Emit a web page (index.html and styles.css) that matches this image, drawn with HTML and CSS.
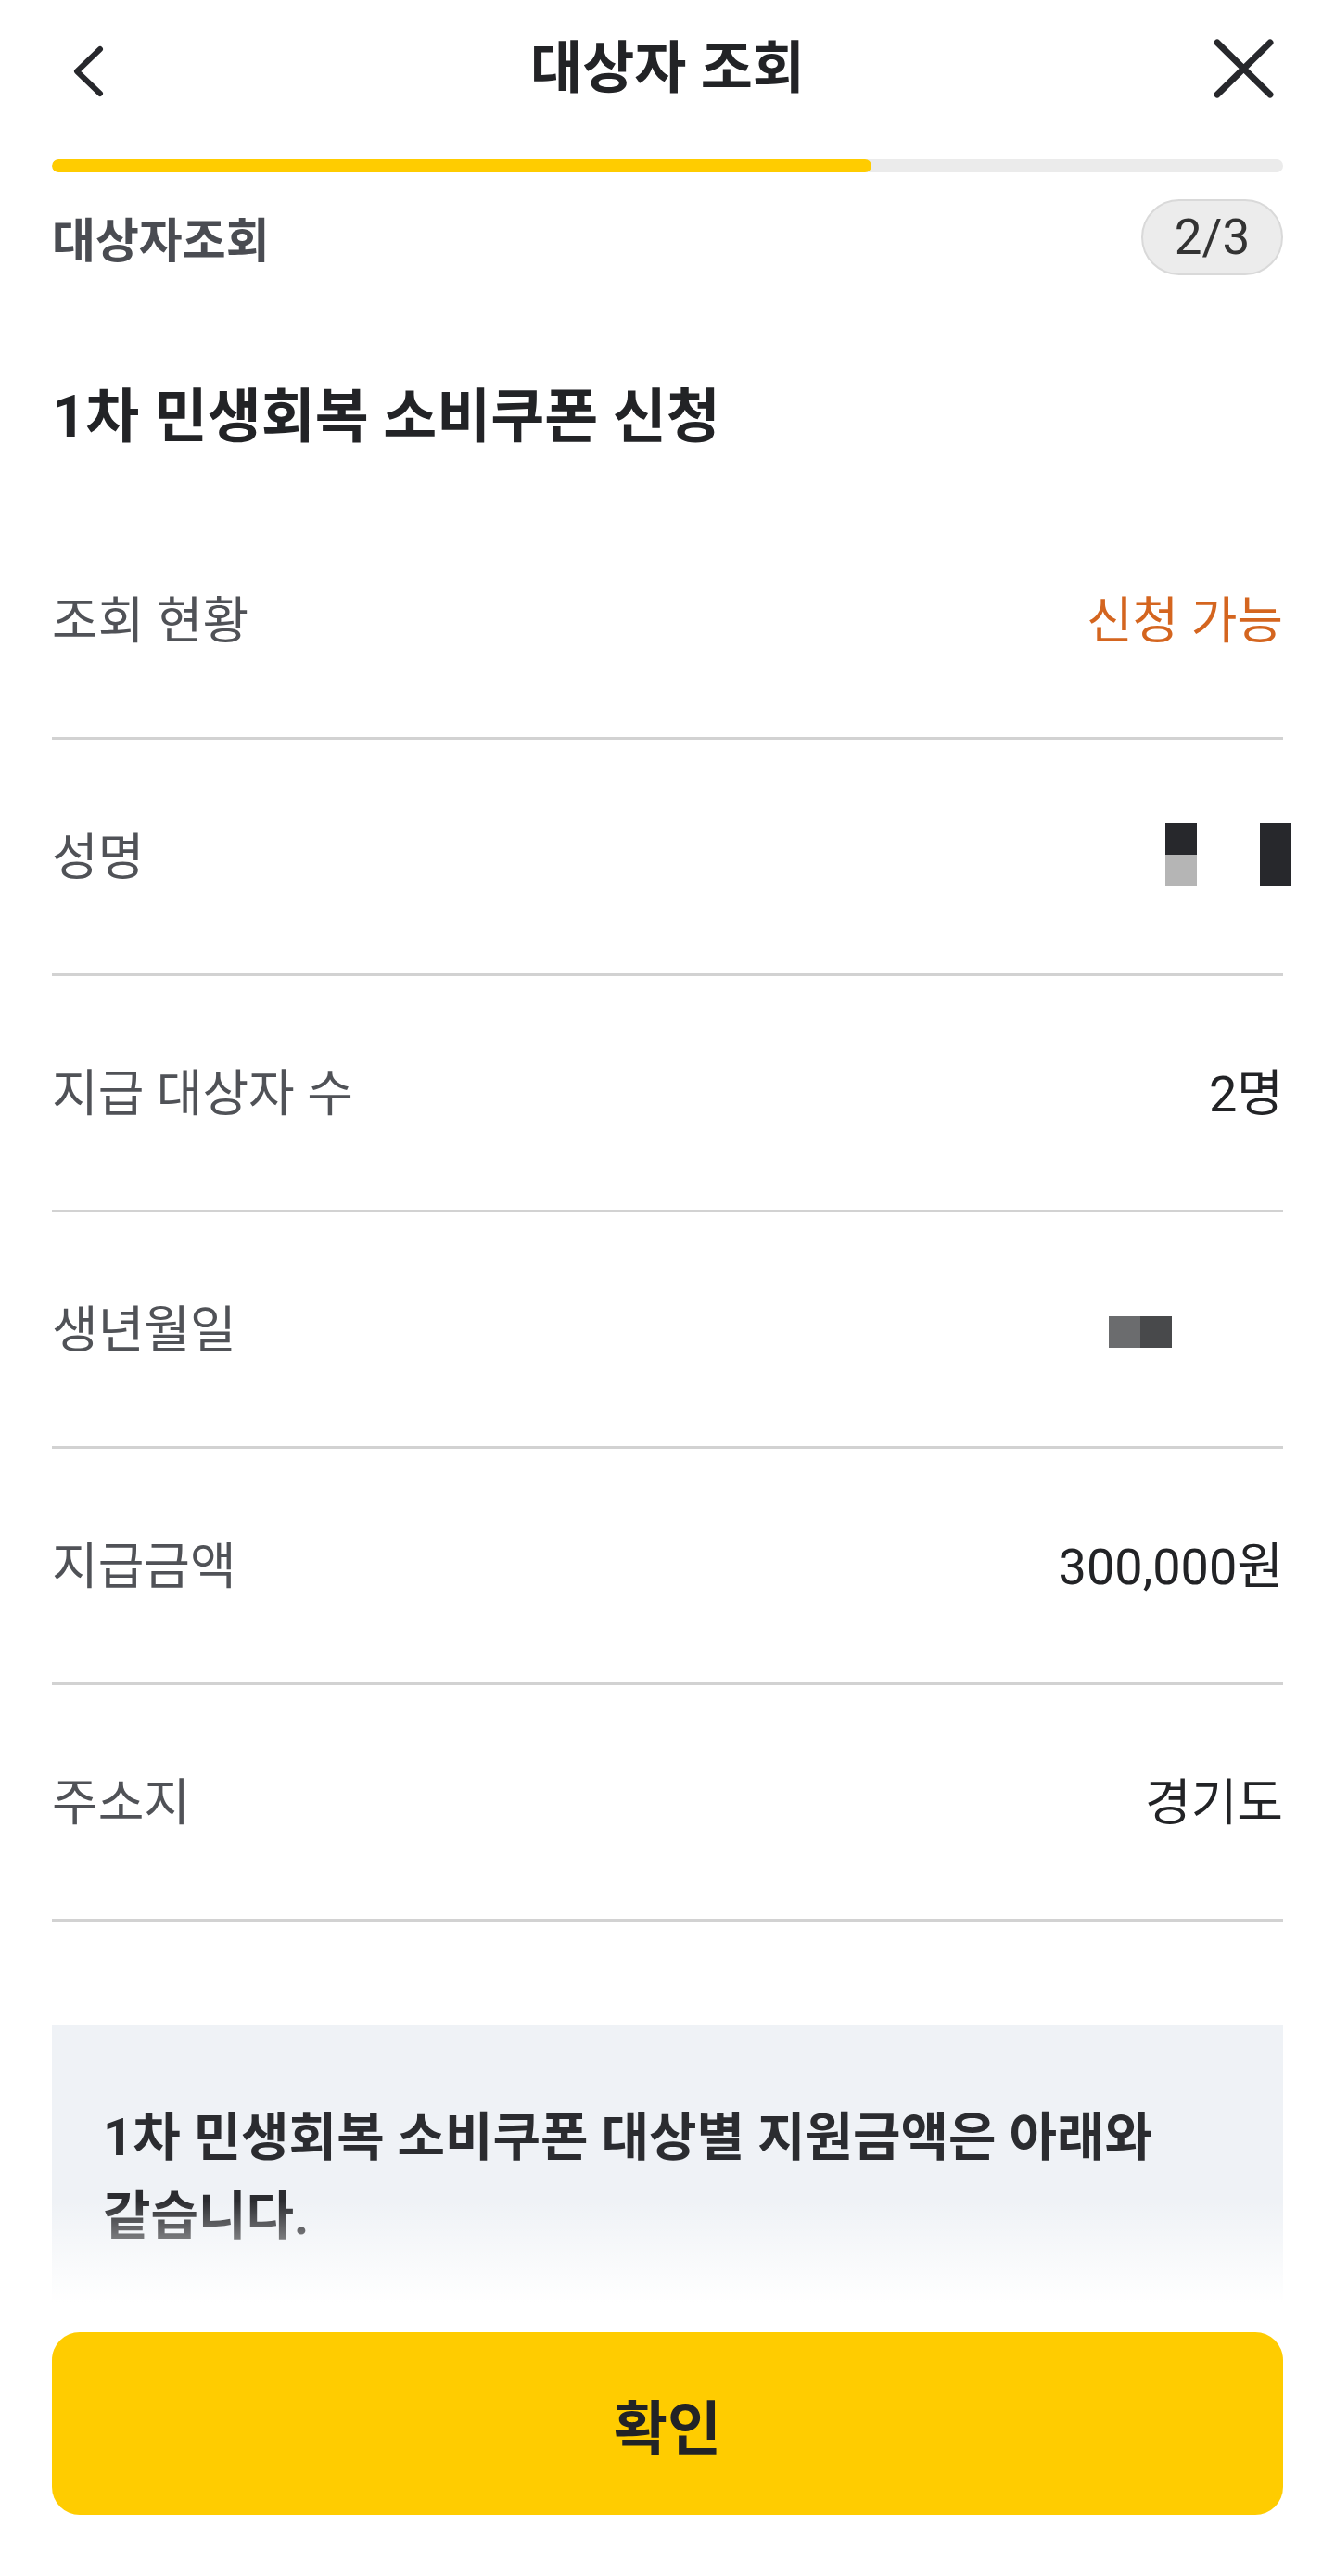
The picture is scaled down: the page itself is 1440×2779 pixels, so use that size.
FILE: index.html
```html
<!DOCTYPE html>
<html lang="ko">
<head>
    <meta charset="UTF-8">
    <meta name="viewport" content="width=device-width, initial-scale=1.0">
    <title>대상자 조회</title>
    <link rel="stylesheet" href="styles.css">
</head>
<body>
    <header class="topbar">
        <button class="icon-btn back" aria-label="뒤로">
            <svg width="64" height="64" viewBox="0 0 64 64">
                <path d="M52 11 L27 35 L52 59" fill="none" stroke="#27282c" stroke-width="6" stroke-linecap="round" stroke-linejoin="round"/>
            </svg>
        </button>
        <h1 class="topbar-title">대상자 조회</h1>
        <button class="icon-btn close" aria-label="닫기">
            <svg width="80" height="80" viewBox="0 0 80 80">
                <path d="M9 12 L66 68 M66 12 L9 68" fill="none" stroke="#27282c" stroke-width="7" stroke-linecap="round"/>
            </svg>
        </button>
    </header>

    <div class="progress">
        <div class="progress-fill"></div>
    </div>

    <div class="step">
        <span class="step-name">대상자조회</span>
        <span class="step-badge">2/3</span>
    </div>

    <h2 class="page-title">1차 민생회복 소비쿠폰 신청</h2>

    <ul class="info-list">
        <li class="info-row">
            <span class="label">조회 현황</span>
            <span class="value value-ok">신청 가능</span>
        </li>
        <li class="info-row">
            <span class="label">성명</span>
            <span class="mask-name">
                <span class="mask mask-split"></span>
                <span class="mask mask-dark"></span>
            </span>
        </li>
        <li class="info-row">
            <span class="label">지급 대상자 수</span>
            <span class="value">2명</span>
        </li>
        <li class="info-row">
            <span class="label">생년월일</span>
            <span class="mask-birth">
                <span class="sq sq-mid"></span>
                <span class="sq sq-dark"></span>
            </span>
        </li>
        <li class="info-row">
            <span class="label">지급금액</span>
            <span class="value">300,000원</span>
        </li>
        <li class="info-row">
            <span class="label">주소지</span>
            <span class="value">경기도</span>
        </li>
    </ul>

    <div class="notice">
        <p>1차 민생회복 소비쿠폰 대상별 지원금액은 아래와 같습니다.</p>
    </div>

    <div class="bottom-bar">
        <button class="btn-confirm">확인</button>
    </div>
</body>
</html>
```

FILE: styles.css
```css
:root {
    --yellow: #ffcc00;
    --text: #222326;
    --label: #505257;
    --line: #d2d2d2;
    --orange: #d4651f;
    --notice-bg: #eff2f6;
}
body {
    margin: 0;
    padding: 0;
    background: #fff;
    color: var(--text);
    font-family: Roboto, "Noto Sans CJK KR", sans-serif;
    word-break: keep-all;
    overflow: hidden;
}
.topbar {
    display: grid;
    grid-template-columns: 1fr auto 1fr;
    align-items: center;
    height: 148px;
    padding: 0 56px;
}
.icon-btn {
    background: none;
    border: 0;
    padding: 0;
    display: flex;
}
.back {
    justify-self: start;
}
.close {
    justify-self: end;
}
.topbar-title {
    margin: 0;
    font-size: 61px;
    font-weight: 700;
    line-height: 80px;
    color: var(--text);
}
.progress {
    margin: 24px 56px 0;
    height: 14px;
    border-radius: 7px;
    background: #ebebeb;
    overflow: hidden;
}
.progress-fill {
    width: 66.6%;
    height: 100%;
    border-radius: 7px;
    background: var(--yellow);
}
.step {
    display: flex;
    justify-content: space-between;
    align-items: center;
    margin: 29px 56px 0;
    height: 82px;
}
.step-name {
    font-size: 51px;
    font-weight: 700;
    color: #4a4c52;
}
.step-badge {
    box-sizing: border-box;
    width: 153px;
    height: 82px;
    border: 2px solid #d9d9d9;
    border-radius: 41px;
    background: #ececec;
    display: flex;
    align-items: center;
    justify-content: center;
    font-size: 53px;
    color: #333;
}
.page-title {
    margin: 113px 56px 0;
    font-size: 63px;
    font-weight: 700;
    line-height: 80px;
    color: var(--text);
}
.info-list {
    list-style: none;
    margin: 53px 56px 0;
    padding: 0;
}
.info-row {
    display: flex;
    justify-content: space-between;
    align-items: center;
    height: 244px;
    padding-bottom: 8px;
    border-bottom: 3px solid var(--line);
    font-size: 54px;
}
.label {
    color: var(--label);
}
.value {
    color: var(--text);
}
.value-ok {
    color: var(--orange);
}
.mask-name {
    display: flex;
    gap: 68px;
    margin-right: -9px;
    margin-top: 4px;
}
.mask {
    width: 34px;
    height: 68px;
}
.mask-split {
    background: linear-gradient(#27282c 50%, #b5b5b5 50%);
}
.mask-dark {
    background: #27282c;
}
.mask-birth {
    display: flex;
    margin-right: 120px;
    margin-top: 14px;
}
.sq {
    width: 34px;
    height: 34px;
}
.sq-mid {
    background: #6b6c6e;
}
.sq-dark {
    background: #48494b;
}
.notice {
    margin: 112px 56px 0;
    padding: 79px 55px 50px;
    background: var(--notice-bg);
}
.notice p {
    margin: 0;
    font-size: 56px;
    font-weight: 700;
    line-height: 85px;
    color: #2b2c30;
}
.bottom-bar {
    position: relative;
    padding: 32px 56px 66px;
    background: #fff;
}
.bottom-bar::before {
    content: "";
    position: absolute;
    left: 0;
    right: 0;
    bottom: 100%;
    height: 110px;
    background: linear-gradient(rgba(255,255,255,0), #fff);
}
.btn-confirm {
    display: block;
    width: 100%;
    height: 197px;
    border: 0;
    border-radius: 30px;
    background: var(--yellow);
    font-family: Roboto, "Noto Sans CJK KR", sans-serif;
    font-size: 63px;
    font-weight: 700;
    color: var(--text);
}
```
